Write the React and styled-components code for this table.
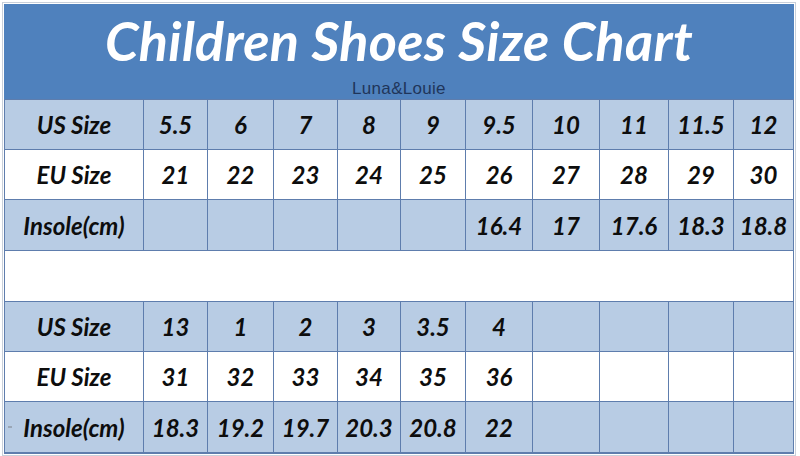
import React from 'react';
import styled, { createGlobalStyle } from 'styled-components';

const COLUMNS = '139px 64px 66px 64px 63px 65px 67px 67px 69px 65px 1fr';

const tables = [
  [
    { label: 'US Size', shade: true, height: 50, values: ['5.5', '6', '7', '8', '9', '9.5', '10', '11', '11.5', '12'] },
    { label: 'EU Size', height: 50, values: ['21', '22', '23', '24', '25', '26', '27', '28', '29', '30'] },
    { label: 'Insole(cm)', shade: true, height: 51, values: ['', '', '', '', '', '16.4', '17', '17.6', '18.3', '18.8'] },
  ],
  [
    { label: 'US Size', shade: true, height: 50, values: ['13', '1', '2', '3', '3.5', '4', '', '', '', ''] },
    { label: 'EU Size', height: 50, values: ['31', '32', '33', '34', '35', '36', '', '', '', ''] },
    { label: 'Insole(cm)', shade: true, height: 51, mark: true, values: ['18.3', '19.2', '19.7', '20.3', '20.8', '22', '', '', '', ''] },
  ],
];

const GlobalStyle = createGlobalStyle`
  html, body {
    margin: 0;
    padding: 0;
    background: #ffffff;
  }
`;

const Frame = styled.div`
  width: 794px;
  margin: 2px;
  padding: 1px;
  border: 1px solid #c9d0da;
  box-sizing: border-box;
`;

const Chart = styled.div`
  border: 1px solid #5e7dad;
  border-top: none;
  display: flex;
  flex-direction: column;
`;

const Header = styled.div`
  height: 96px;
  background: #4f81bd;
  border-bottom: 1px solid #5e7dad;
  box-sizing: border-box;
  display: flex;
  flex-direction: column;
  align-items: center;
  margin: 0 -1px;
`;

const Title = styled.h1`
  margin: 10px 0 0;
  font-family: Lato, "Open Sans", sans-serif;
  font-style: italic;
  font-weight: 700;
  font-size: 54px;
  line-height: 54px;
  letter-spacing: 0.3px;
  color: #ffffff;
`;

const Brand = styled.div`
  margin-top: 12px;
  font-family: "Liberation Sans", Arial, sans-serif;
  font-size: 17px;
  line-height: 17px;
  letter-spacing: 0.3px;
  color: #1f355a;
`;

const Row = styled.div`
  display: grid;
  grid-template-columns: ${COLUMNS};
  height: ${(p) => p.$height}px;
  background: ${(p) => (p.$shade ? '#b8cce4' : '#ffffff')};
  border-bottom: 1px solid #5e7dad;
  box-sizing: border-box;
`;

const Spacer = styled.div`
  height: 51px;
  background: #ffffff;
  border-bottom: 1px solid #5e7dad;
  box-sizing: border-box;
`;

const Cell = styled.div`
  position: relative;
  display: flex;
  align-items: center;
  justify-content: center;
  border-right: 1px solid #5e7dad;
  font-family: Lato, "Open Sans", sans-serif;
  font-style: italic;
  font-weight: 700;
  font-size: 24px;
  color: #0d0d0d;

  &:last-child {
    border-right: none;
  }
`;

const Mark = styled.span`
  position: absolute;
  left: 3px;
  top: 24px;
  width: 4px;
  height: 2px;
  background: #9aa6b6;
`;

const SizeTable = ({ rows }) => (
  <>
    {rows.map((row) => (
      <Row key={row.label} $shade={row.shade} $height={row.height}>
        <Cell>
          {row.mark && <Mark />}
          {row.label}
        </Cell>
        {row.values.map((v, i) => (
          <Cell key={i}>{v}</Cell>
        ))}
      </Row>
    ))}
  </>
);

const App = () => (
  <>
    <GlobalStyle />
    <Frame>
      <Chart>
        <Header>
          <Title>Children Shoes Size Chart</Title>
          <Brand>Luna&amp;Louie</Brand>
        </Header>
        <SizeTable rows={tables[0]} />
        <Spacer />
        <SizeTable rows={tables[1]} />
      </Chart>
    </Frame>
  </>
);

export default App;
